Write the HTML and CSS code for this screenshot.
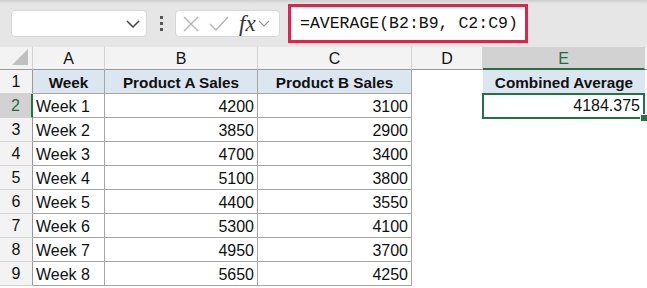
FILE: index.html
```html
<!DOCTYPE html>
<html lang="en">
<head>
    <meta charset="UTF-8">
    <title>Combined Average</title>
    <link rel="stylesheet" href="styles.css">
</head>
<body>
    <div class="toolbar">
        <div class="namebox">
            <svg class="chev" width="14" height="8" viewBox="0 0 14 8"><path d="M1 1 L7 7 L13 1" fill="none" stroke="#444" stroke-width="1.5"/></svg>
        </div>
        <div class="dots"><span></span><span></span><span></span></div>
        <div class="fxgroup">
            <svg width="18" height="18" viewBox="0 0 18 18"><path d="M2 2 L16 16 M16 2 L2 16" stroke="#b5b5b5" stroke-width="1.4"/></svg>
            <svg width="20" height="16" viewBox="0 0 20 16"><path d="M1 8 L7 14 L19 1" fill="none" stroke="#b5b5b5" stroke-width="1.4"/></svg>
            <span class="fx">fx</span>
            <svg width="12" height="8" viewBox="0 0 12 8"><path d="M1 1 L6 6 L11 1" fill="none" stroke="#999" stroke-width="1.2"/></svg>
        </div>
        <div class="formula">=AVERAGE(B2:B9, C2:C9)</div>
    </div>

    <div class="sheet">
        <div class="corner"></div>
        <div class="colhead">A</div>
        <div class="colhead">B</div>
        <div class="colhead">C</div>
        <div class="colhead">D</div>
        <div class="colhead sel">E</div>
        <div class="colhead edge"></div>

        <div class="rowhead">1</div>
        <div class="cell th">Week</div>
        <div class="cell th">Product A Sales</div>
        <div class="cell th">Product B Sales</div>
        <div class="blank"></div>
        <div class="blank th">Combined Average</div>
        <div class="blank"></div>

        <div class="rowhead sel">2</div>
        <div class="cell">Week 1</div>
        <div class="cell num">4200</div>
        <div class="cell num">3100</div>
        <div class="blank"></div>
        <div class="blank num active">4184.375<span class="handle"></span></div>
        <div class="blank"></div>

        <div class="rowhead">3</div>
        <div class="cell">Week 2</div>
        <div class="cell num">3850</div>
        <div class="cell num">2900</div>
        <div class="blank"></div><div class="blank"></div><div class="blank"></div>

        <div class="rowhead">4</div>
        <div class="cell">Week 3</div>
        <div class="cell num">4700</div>
        <div class="cell num">3400</div>
        <div class="blank"></div><div class="blank"></div><div class="blank"></div>

        <div class="rowhead">5</div>
        <div class="cell">Week 4</div>
        <div class="cell num">5100</div>
        <div class="cell num">3800</div>
        <div class="blank"></div><div class="blank"></div><div class="blank"></div>

        <div class="rowhead">6</div>
        <div class="cell">Week 5</div>
        <div class="cell num">4400</div>
        <div class="cell num">3550</div>
        <div class="blank"></div><div class="blank"></div><div class="blank"></div>

        <div class="rowhead">7</div>
        <div class="cell">Week 6</div>
        <div class="cell num">5300</div>
        <div class="cell num">4100</div>
        <div class="blank"></div><div class="blank"></div><div class="blank"></div>

        <div class="rowhead">8</div>
        <div class="cell">Week 7</div>
        <div class="cell num">4950</div>
        <div class="cell num">3700</div>
        <div class="blank"></div><div class="blank"></div><div class="blank"></div>

        <div class="rowhead">9</div>
        <div class="cell">Week 8</div>
        <div class="cell num">5650</div>
        <div class="cell num">4250</div>
        <div class="blank"></div><div class="blank"></div><div class="blank"></div>
    </div>
</body>
</html>
```

FILE: styles.css
```css
body {
    margin: 0;
    background: #fff;
    font-family: "Liberation Sans", Arial, sans-serif;
    overflow: hidden;
}
.toolbar {
    height: 47px;
    background: linear-gradient(#cfcfcf, #e6e6e6 4px, #e6e6e6);
    display: flex;
    align-items: center;
    padding-left: 11px;
    box-sizing: border-box;
}
.namebox {
    width: 136px;
    height: 27px;
    background: #fff;
    border: 1px solid #d8d8d8;
    border-radius: 4px;
    box-sizing: border-box;
    display: flex;
    align-items: center;
    justify-content: flex-end;
    padding-right: 6px;
}
.dots {
    width: 28px;
    display: flex;
    flex-direction: column;
    align-items: center;
    gap: 3px;
}
.dots span {
    width: 3px;
    height: 3px;
    background: #555;
}
.fxgroup {
    width: 105px;
    height: 27px;
    background: #fff;
    border: 1px solid #d8d8d8;
    border-radius: 4px;
    box-sizing: border-box;
    display: flex;
    align-items: center;
    padding-left: 6px;
    gap: 9px;
}
.fx {
    font-family: "Liberation Serif", "Times New Roman", serif;
    font-style: italic;
    font-size: 23px;
    color: #333;
    margin-left: 1px;
    margin-right: -7px;
    line-height: 1;
}
.formula {
    margin-left: 8px;
    width: 240px;
    height: 39px;
    background: #fff;
    border: 3px solid #e2214f;
    box-sizing: border-box;
    font-family: "Liberation Mono", monospace;
    font-size: 16.5px;
    padding-left: 9px;
    line-height: 33px;
    color: #111;
    margin-top: -1px;
}
.sheet {
    display: grid;
    grid-template-columns: 33px 72px 153px 154px 71px 162px 2px;
    grid-template-rows: 23px repeat(9, 24px);
    font-size: 16px;
    color: #111;
}
.sheet > div {
    box-sizing: border-box;
    white-space: nowrap;
    overflow: visible;
}
.corner {
    background: #f3f3f3;
    border-right: 1px solid #d2d2d2;
    border-bottom: 1px solid #9a9a9a;
    position: relative;
}
.corner::after {
    content: "";
    position: absolute;
    right: 4px;
    bottom: 4px;
    border-left: 16px solid transparent;
    border-bottom: 16px solid #c0c0c0;
}
.colhead {
    background: #f3f3f3;
    border-right: 1px solid #d2d2d2;
    border-bottom: 1px solid #9a9a9a;
    text-align: center;
    line-height: 23px;
    font-size: 16px;
}
.colhead.sel {
    background: #d2d2d2;
    color: #1f6b3e;
    border-bottom: 2px solid #217346;
}
.colhead.edge {
    border-right: none;
}
.rowhead {
    background: #f3f3f3;
    border-right: 1px solid #9a9a9a;
    border-bottom: 1px solid #d2d2d2;
    text-align: center;
    line-height: 24px;
    font-size: 16px;
}
.rowhead.sel {
    background: #d2d2d2;
    color: #1f6b3e;
    border-right: 2px solid #217346;
}
.cell {
    border-right: 1px solid #a6a6a6;
    border-bottom: 1px solid #a6a6a6;
    padding: 0 3px;
    line-height: 25px;
}
.blank {
    padding: 0 3px;
    line-height: 25px;
}
.th {
    background: #dce6f1;
    font-weight: bold;
    text-align: center;
    font-size: 15.3px;
}
.num {
    text-align: right;
}
.active {
    border: 2px solid #217346;
    margin: -1px 0 -1px -1px;
    line-height: 22px;
    position: relative;
}
.handle {
    position: absolute;
    right: -5px;
    bottom: -5px;
    width: 6px;
    height: 6px;
    background: #217346;
    border: 1px solid #fff;
}
```
